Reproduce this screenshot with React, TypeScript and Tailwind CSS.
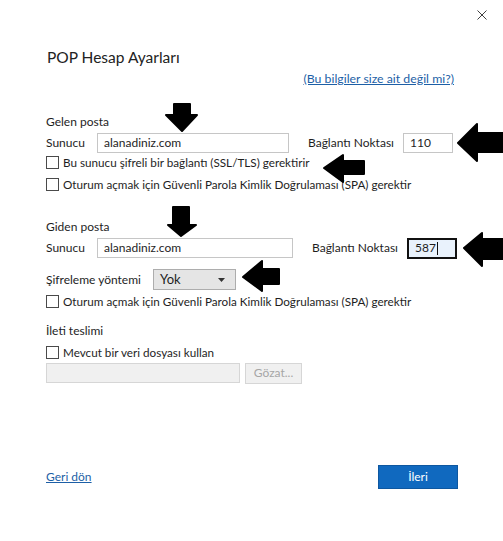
import React from "react";

const font = { fontFamily: 'Lato, "Noto Sans", sans-serif' };

function Checkbox() {
  return <div className="w-[13px] h-[13px] border border-[#4a4a4a] bg-white shrink-0" />;
}

function CheckRow({ label, mt }: { label: string; mt: string }) {
  return (
    <div className={`flex items-center h-[14px] gap-[4px] ${mt}`}>
      <Checkbox />
      <span className="text-[11.7px] leading-[14px] text-[#1e1e1e] whitespace-nowrap">{label}</span>
    </div>
  );
}

function Arrows() {
  return (
    <svg className="absolute left-0 top-0 pointer-events-none" width="503" height="541" viewBox="0 0 503 541">
      <g fill="#000" stroke="#000" strokeWidth="2" strokeLinejoin="round">
        <polygon points="174,104 190,104 190,115 197,115 182,131 166,115 174,115" />
        <polygon points="173,207 189,207 189,225 196,225 181,236 168,225 173,225" />
        <polygon points="458,143 477,124 477,133 503,133 503,152 477,152 477,161" />
        <polygon points="324,168 343,155 343,161 364,161 364,174 343,174 343,182" />
        <polygon points="243,277 262,261 262,269 279,269 279,284 262,284 262,291" />
        <polygon points="464,248 482,233 482,239 503,239 503,259 482,259 482,266" />
      </g>
    </svg>
  );
}

export default function App() {
  return (
    <div className="relative w-[503px] h-[541px] bg-white text-[#1e1e1e]" style={font}>
      <div className="flex justify-end h-[30px] pt-[10px] pr-[16px]">
        <svg width="10" height="10" viewBox="0 0 10 10">
          <path d="M0.5 0.5 L9.5 9.5 M9.5 0.5 L0.5 9.5" stroke="#404040" strokeWidth="1" />
        </svg>
      </div>
      <div className="px-[46px] text-[12px]">
        <div className="h-[24px] mt-[16px] flex items-center text-[15.5px] text-[#222] pl-[1px]">POP Hesap Ayarları</div>
        <div className="h-[16px] mt-[1px] flex items-center justify-end pr-[3px]">
          <span className="text-[12.3px] text-[#1d5fa6] underline">(Bu bilgiler size ait değil mi?)</span>
        </div>

        <div className="h-[16px] mt-[27px] flex items-center">Gelen posta</div>
        <div className="h-[20px] mt-[3px] flex items-center">
          <span className="w-[51px] shrink-0">Sunucu</span>
          <div className="w-[192px] h-[20px] border border-[#c6c6c6] flex items-center pl-[6px] shrink-0">alanadiniz.com</div>
          <span className="ml-[19px] w-[95px] shrink-0">Bağlantı Noktası</span>
          <div className="w-[50px] h-[20px] border border-[#c6c6c6] flex items-center pl-[6px] shrink-0">110</div>
        </div>
        <CheckRow mt="mt-[2px]" label="Bu sunucu şifreli bir bağlantı (SSL/TLS) gerektirir" />
        <CheckRow mt="mt-[8px]" label="Oturum açmak için Güvenli Parola Kimlik Doğrulaması (SPA) gerektir" />

        <div className="h-[16px] mt-[28px] flex items-center">Giden posta</div>
        <div className="h-[20px] mt-[3px] flex items-center">
          <span className="w-[51px] shrink-0">Sunucu</span>
          <div className="w-[196px] h-[20px] border border-[#c6c6c6] flex items-center pl-[6px] shrink-0">alanadiniz.com</div>
          <span className="ml-[19px] w-[95px] shrink-0">Bağlantı Noktası</span>
          <div className="w-[50px] h-[21px] border-2 border-[#111] bg-[#e9f2fc] flex items-center pl-[6px] shrink-0">
            587<span className="w-[1px] h-[13px] bg-[#111] ml-[1px]" />
          </div>
        </div>
        <div className="h-[21px] mt-[11px] flex items-center">
          <span className="w-[107px] shrink-0">Şifreleme yöntemi</span>
          <div className="w-[83px] h-[21px] border border-[#adadad] bg-[#e5e5e5] flex items-center justify-between pl-[6px] pr-[10px]">
            <span className="text-[13px]">Yok</span>
            <svg width="7" height="4" viewBox="0 0 7 4"><polygon points="0,0 7,0 3.5,4" fill="#333" /></svg>
          </div>
        </div>
        <CheckRow mt="mt-[4px]" label="Oturum açmak için Güvenli Parola Kimlik Doğrulaması (SPA) gerektir" />

        <div className="h-[16px] mt-[15px] flex items-center">İleti teslimi</div>
        <CheckRow mt="mt-[6px]" label="Mevcut bir veri dosyası kullan" />
        <div className="h-[20px] mt-[4px] flex items-center gap-[5px]">
          <div className="w-[194px] h-[20px] border border-[#d6d6d6] bg-[#f0f0f0]" />
          <div className="w-[57px] h-[21px] border border-[#d6d6d6] bg-[#f0f0f0] flex items-center justify-center text-[#a6a6a6]">Gözat...</div>
        </div>

        <div className="h-[24px] mt-[82px] flex items-center justify-between">
          <span className="text-[#1d5fa6] underline">Geri dön</span>
          <div className="w-[80px] h-[24px] bg-[#1069bf] border border-[#0d57a0] flex items-center justify-center text-white mr-[-1px]">İleri</div>
        </div>
      </div>
      <Arrows />
    </div>
  );
}
